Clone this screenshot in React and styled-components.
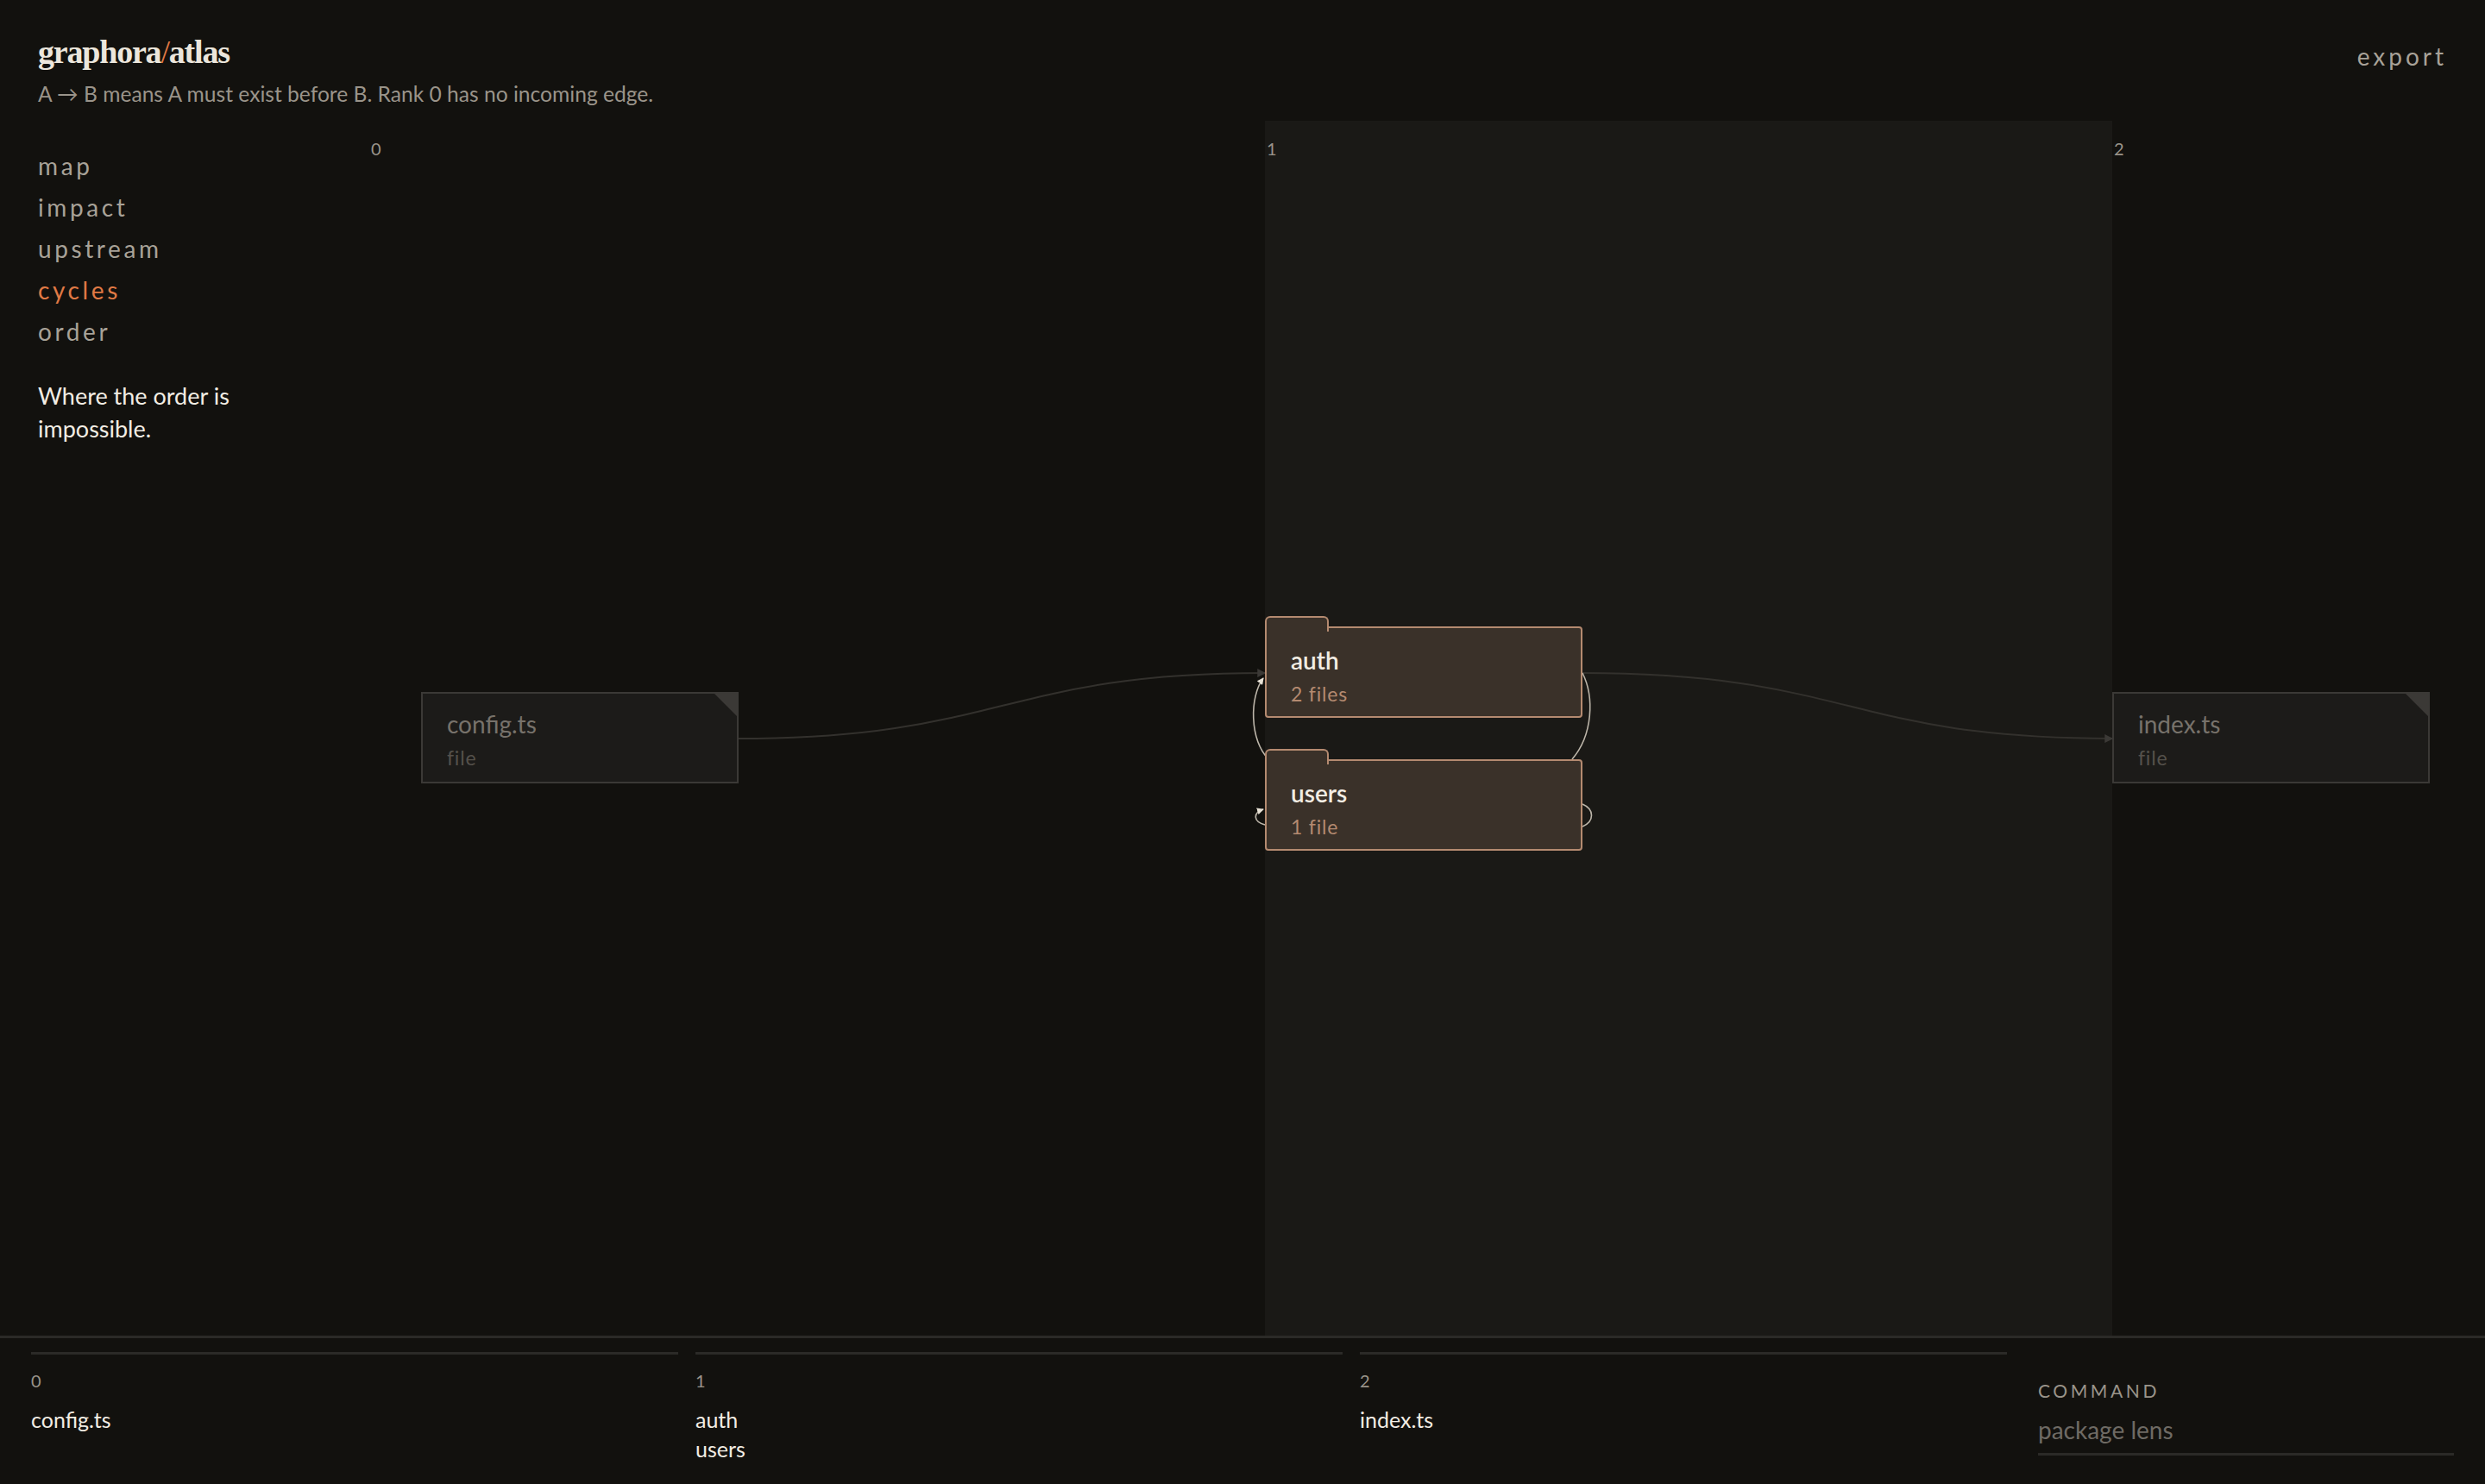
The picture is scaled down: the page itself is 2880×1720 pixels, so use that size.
import React from "react";
import styled, { createGlobalStyle } from "styled-components";

const u = n => `${n * 2}px`;

const Global = createGlobalStyle`
  html, body { margin: 0; padding: 0; background: #12110e; }
  body { font-family: Lato, "Noto Sans", sans-serif; color: #ece6dc; }
  * { box-sizing: border-box; }
`;

const Page = styled.div`
  height: 100vh;
  display: flex;
  flex-direction: column;
  background: #12110e;
  overflow: hidden;
`;

const Header = styled.header`
  height: ${u(70)};
  display: flex;
  justify-content: space-between;
  align-items: flex-start;
  padding: ${u(19)} ${u(22)} 0 ${u(22)};
  flex: none;
`;

const Title = styled.h1`
  margin: 0;
  font-family: "Liberation Serif", "DejaVu Serif", serif;
  font-weight: 700;
  font-size: ${u(19)};
  letter-spacing: ${u(-0.6)};
  line-height: ${u(22)};
  color: #ece6dc;
  span { color: #e07a45; font-weight: 400; }
`;

const Sub = styled.p`
  margin: ${u(6)} 0 0;
  font-size: ${u(12.3)};
  color: #9a948a;
`;

const Export = styled.button`
  background: none;
  border: 0;
  color: #a8a298;
  font-family: Lato, sans-serif;
  font-size: ${u(14)};
  letter-spacing: ${u(2)};
  padding: 0;
  margin-top: ${u(5)};
  cursor: pointer;
`;

const Body = styled.div`
  flex: 1;
  display: grid;
  grid-template-columns: ${u(211)} 1fr;
  min-height: 0;
`;

const Side = styled.nav`
  padding: ${u(14)} 0 0 ${u(22)};
  display: flex;
  flex-direction: column;
`;

const NavItem = styled.div`
  font-size: ${u(14)};
  letter-spacing: ${u(1.8)};
  line-height: ${u(24)};
  color: ${p => (p.$active ? "#e07a45" : "#a8a298")};
`;

const Blurb = styled.p`
  margin: ${u(16)} 0 0;
  font-size: ${u(13.5)};
  line-height: ${u(19)};
  width: ${u(130)};
  color: #f2ede4;
`;

const Canvas = styled.div`
  position: relative;
  overflow: hidden;
`;

const Band = styled.div`
  position: absolute;
  top: 0;
  bottom: 0;
  left: ${u(522)};
  width: ${u(491)};
  background: #1a1916;
`;

const RankLabel = styled.span`
  position: absolute;
  top: ${u(10)};
  font-size: ${u(10)};
  color: #9a948a;
`;

const Ghost = styled.div`
  position: absolute;
  top: ${u(331)};
  width: ${u(184)};
  height: ${u(53)};
  background: #1c1b19;
  border: 2px solid #3b3936;
  padding: ${u(8)} ${u(14)};
  &::after {
    content: "";
    position: absolute;
    right: 0;
    top: 0;
    border-style: solid;
    border-width: 0 ${u(13)} ${u(13)} 0;
    border-color: transparent #3b3936 transparent transparent;
  }
`;

const NodeName = styled.div`
  font-size: ${u(14)};
  line-height: ${u(19)};
  color: ${p => (p.$dim ? "#77726b" : "#f2ede4")};
  font-weight: ${p => (p.$dim ? 400 : 600)};
`;

const NodeMeta = styled.div`
  font-size: ${u(11.5)};
  margin-top: ${u(3)};
  letter-spacing: ${u(0.4)};
  color: ${p => (p.$dim ? "#55514b" : "#b48a70")};
`;

const Folder = styled.div`
  position: absolute;
  left: ${u(522)};
  width: ${u(184)};
  height: ${u(53)};
  background: #3a3129;
  border: 2px solid #b48a70;
  border-radius: 4px;
  padding: ${u(9)} ${u(14)};
  &::before {
    content: "";
    position: absolute;
    left: -2px;
    top: ${u(-7)};
    width: ${u(35)};
    height: ${u(8)};
    background: #3a3129;
    border: 2px solid #b48a70;
    border-bottom: 0;
    border-radius: 6px 6px 0 0;
  }
`;

const Edges = styled.svg`
  position: absolute;
  inset: 0;
  width: 100%;
  height: 100%;
  pointer-events: none;
`;

const Footer = styled.footer`
  flex: none;
  height: ${u(86)};
  border-top: 3px solid #2b2a27;
  display: grid;
  grid-template-columns: repeat(3, ${u(375)}) 1fr;
  column-gap: ${u(10)};
  padding: ${u(8)} ${u(18)} 0 ${u(18)};
`;

const RankCol = styled.div`
  border-top: 3px solid #2b2a27;
  padding-top: ${u(9)};
`;

const ColNum = styled.div`
  font-size: ${u(10)};
  color: #9a948a;
  margin-bottom: ${u(8)};
`;

const ColItem = styled.div`
  font-size: ${u(12.5)};
  line-height: ${u(17)};
  color: #f2ede4;
`;

const Command = styled.div`
  padding: ${u(16)} 0 0 ${u(8)};
  display: flex;
  flex-direction: column;
`;

const CmdLabel = styled.div`
  font-size: ${u(10.5)};
  letter-spacing: ${u(1.8)};
  color: #9a948a;
`;

const CmdInput = styled.input`
  margin-top: ${u(6)};
  background: none;
  border: 0;
  border-bottom: 3px solid #2b2a27;
  color: #ece6dc;
  font-family: Lato, sans-serif;
  font-size: ${u(14)};
  padding: ${u(2)} 0 ${u(5)};
  outline: none;
  &::placeholder { color: #6e6a64; }
`;

const ranks = [
  { n: 0, items: ["config.ts"] },
  { n: 1, items: ["auth", "users"] },
  { n: 2, items: ["index.ts"] },
];

export default function App() {
  return (
    <Page>
      <Global />
      <Header>
        <div>
          <Title>graphora<span>/</span>atlas</Title>
          <Sub>A → B means A must exist before B. Rank 0 has no incoming edge.</Sub>
        </div>
        <Export>export</Export>
      </Header>
      <Body>
        <Side>
          {["map", "impact", "upstream", "cycles", "order"].map(t => (
            <NavItem key={t} $active={t === "cycles"}>{t}</NavItem>
          ))}
          <Blurb>Where the order is impossible.</Blurb>
        </Side>
        <Canvas>
          <Band />
          <RankLabel style={{ left: 8 }}>0</RankLabel>
          <RankLabel style={{ left: 1046 }}>1</RankLabel>
          <RankLabel style={{ left: 2028 }}>2</RankLabel>
          <Edges viewBox="0 0 1229 700" preserveAspectRatio="xMinYMin meet">
            <defs>
              <marker id="ad" viewBox="0 0 8 8" refX="7" refY="4" markerWidth="5" markerHeight="5" orient="auto">
                <path d="M0 0 L8 4 L0 8z" fill="#3b3936" />
              </marker>
              <marker id="al" viewBox="0 0 8 8" refX="7" refY="4" markerWidth="5" markerHeight="5" orient="auto">
                <path d="M0 0 L8 4 L0 8z" fill="#e8e2d6" />
              </marker>
            </defs>
            <path d="M216 358 C370 358 370 320 522 320" stroke="#33312d" fill="none" strokeWidth="1" markerEnd="url(#ad)" />
            <path d="M706 320 C860 320 860 358 1013 358" stroke="#33312d" fill="none" strokeWidth="1" markerEnd="url(#ad)" />
            <path d="M524 370 C513 358 513 334 521 323" stroke="#bdb6aa" fill="none" strokeWidth="0.8" markerEnd="url(#al)" />
            <path d="M706 320 C713 334 712 356 700 370" stroke="#bdb6aa" fill="none" strokeWidth="0.8" />
            <path d="M706 396 C713 399 713 406 706 409" stroke="#bdb6aa" fill="none" strokeWidth="0.8" />
            <path d="M522 408 C515 406 515 401 521 399" stroke="#bdb6aa" fill="none" strokeWidth="0.8" markerEnd="url(#al)" />
          </Edges>
          <Ghost style={{ left: 66 }}>
            <NodeName $dim>config.ts</NodeName>
            <NodeMeta $dim>file</NodeMeta>
          </Ghost>
          <Folder style={{ top: 586 }}>
            <NodeName>auth</NodeName>
            <NodeMeta>2 files</NodeMeta>
          </Folder>
          <Folder style={{ top: 740 }}>
            <NodeName>users</NodeName>
            <NodeMeta>1 file</NodeMeta>
          </Folder>
          <Ghost style={{ left: 2026 }}>
            <NodeName $dim>index.ts</NodeName>
            <NodeMeta $dim>file</NodeMeta>
          </Ghost>
        </Canvas>
      </Body>
      <Footer>
        {ranks.map(r => (
          <RankCol key={r.n}>
            <ColNum>{r.n}</ColNum>
            {r.items.map(i => <ColItem key={i}>{i}</ColItem>)}
          </RankCol>
        ))}
        <Command>
          <CmdLabel>COMMAND</CmdLabel>
          <CmdInput placeholder="package lens" />
        </Command>
      </Footer>
    </Page>
  );
}
